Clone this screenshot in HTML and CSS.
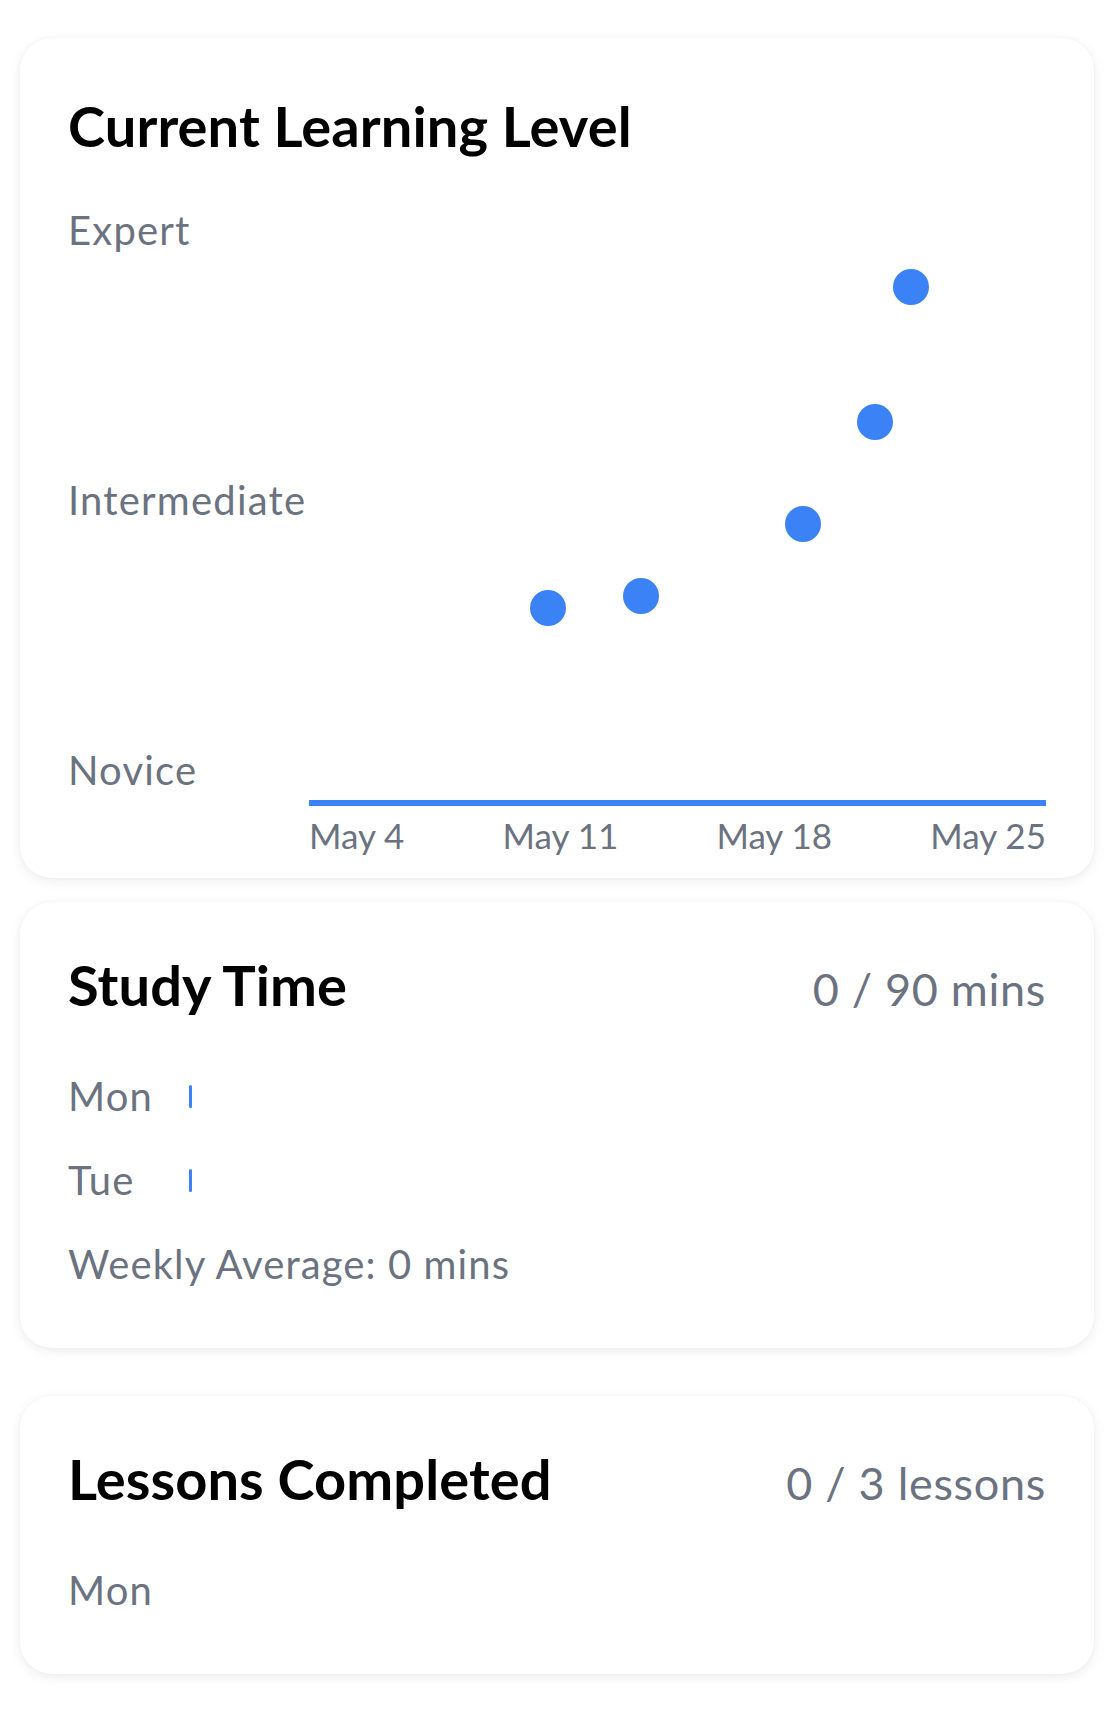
FILE: index.html
```html
<!DOCTYPE html>
<html lang="en">
<head>
<meta charset="utf-8">
<title>Progress</title>
<link rel="stylesheet" href="styles.css">
</head>
<body>
<div class="page">
  <section class="card card-level">
    <h2 class="card-title level-title">Current Learning Level</h2>
    <div class="chart">
      <div class="y-axis">
        <span>Expert</span>
        <span>Intermediate</span>
        <span>Novice</span>
      </div>
      <div class="plot">
        <svg class="plot-area" viewBox="0 0 737 594" width="737" height="594">
          <circle cx="239" cy="402" r="18"/>
          <circle cx="332" cy="390" r="18"/>
          <circle cx="494" cy="318" r="18"/>
          <circle cx="566" cy="216" r="18"/>
          <circle cx="602" cy="81" r="18"/>
        </svg>
        <div class="x-line"></div>
        <div class="x-labels">
          <span>May 4</span>
          <span>May 11</span>
          <span>May 18</span>
          <span>May 25</span>
        </div>
      </div>
    </div>
  </section>

  <section class="card card-study">
    <div class="card-head">
      <h2 class="card-title">Study Time</h2>
      <span class="card-value">0 / 90 mins</span>
    </div>
    <div class="rows">
      <div class="day-row"><span class="day">Mon</span><span class="bar"></span></div>
      <div class="day-row"><span class="day">Tue</span><span class="bar"></span></div>
      <div class="avg">Weekly Average: 0 mins</div>
    </div>
  </section>

  <section class="card card-lessons">
    <div class="card-head">
      <h2 class="card-title">Lessons Completed</h2>
      <span class="card-value">0 / 3 lessons</span>
    </div>
    <div class="lesson-day">Mon</div>
  </section>
</div>
</body>
</html>
```

FILE: styles.css
```css
* { box-sizing: border-box; }

html, body {
  margin: 0;
  padding: 0;
  background: #ffffff;
}

body {
  font-family: "Lato", "Inter", sans-serif;
  color: #6b7280;
}

.page {
  padding: 38px 23px 61px 20px;
  display: flex;
  flex-direction: column;
}

.card {
  background: #ffffff;
  border-radius: 32px;
  box-shadow: 0 3px 12px rgba(0, 0, 0, 0.08), 0 0 3px rgba(0, 0, 0, 0.03);
  padding: 49px 48px 60px 48px;
}

.card-level { padding-bottom: 22px; }
.card-study { margin-top: 24px; }
.card-lessons { margin-top: 48px; }

.card-title {
  margin: 0;
  font-size: 56px;
  line-height: 64px;
  font-weight: 700;
  color: #000000;
  letter-spacing: 0.1px;
}

.level-title { margin-top: 7px; }

.card-head {
  height: 66px;
  display: flex;
  justify-content: space-between;
  align-items: baseline;
  padding-top: 2px;
}

.card-value {
  font-size: 45px;
  line-height: 54px;
  color: #6b7280;
  letter-spacing: 0.7px;
}

/* chart */
.chart {
  margin-top: 48px;
  display: flex;
  align-items: flex-start;
}

.y-axis {
  width: 241px;
  height: 588px;
  display: flex;
  flex-direction: column;
  justify-content: space-between;
  font-size: 40px;
  line-height: 48px;
  letter-spacing: 1.2px;
}

.plot {
  flex: 1;
  display: flex;
  flex-direction: column;
}

.plot-area {
  display: block;
  width: 737px;
  height: 594px;
}

.plot-area circle { fill: #3b82f6; }

.x-line {
  height: 6px;
  background: #3b82f6;
}

.x-labels {
  margin-top: 8px;
  display: flex;
  justify-content: space-between;
  font-size: 35px;
  line-height: 42px;
}

/* study time */
.rows {
  margin-top: 55px;
  display: flex;
  flex-direction: column;
  gap: 36px;
}

.day-row {
  display: flex;
  align-items: center;
  height: 48px;
}

.day {
  width: 121px;
  font-size: 40px;
  line-height: 48px;
  letter-spacing: 1.2px;
}

.bar {
  width: 3px;
  height: 23px;
  border-radius: 2px;
  background: #3b82f6;
}

.avg {
  font-size: 40px;
  line-height: 48px;
  letter-spacing: 1.1px;
}

.lesson-day {
  margin-top: 55px;
  font-size: 40px;
  line-height: 48px;
  letter-spacing: 1.2px;
}
```
